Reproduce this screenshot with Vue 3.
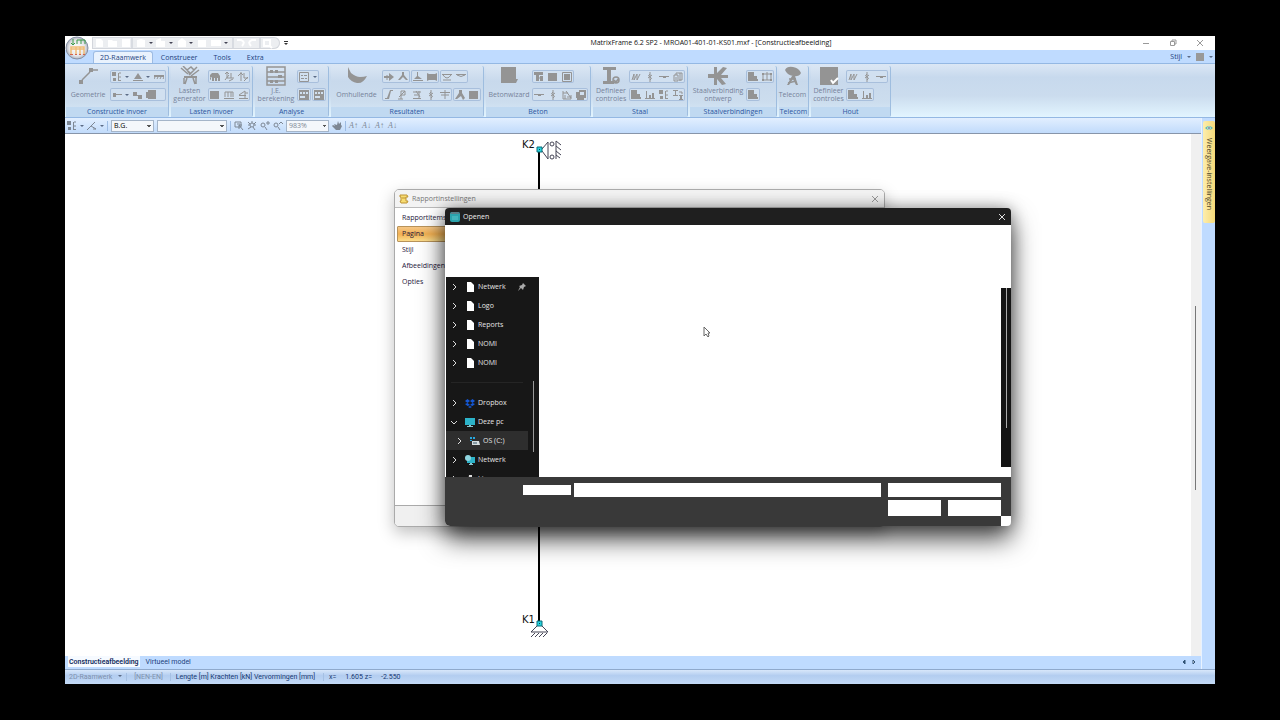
<script setup>
import { h } from 'vue'

// Each glyph is [filled path, stroked path] on a 10 x 10 grid.
const glyphs = {
  nodes: ['M0 0h4v4H0zM1 6h3v3H1zM6 1h1v8H6z', 'M7 1h2M7 5h2M7 8.500h2'],
  support: ['M5 1L9 7H1zM0 8h10v1H0z', ''],
  beam: ['M0 3h10v2H0z', 'M1 5L0 7M4 5L3 7M7 5L6 7M10 5L9 7'],
  rod: ['M1 3h3v1h6v1H4v2H1z', ''],
  corner: ['M0 2h4v3h5v4H5V6H0z', ''],
  solid: ['M0 2h2V0h8v9H2V8H0z', ''],
  block: ['M0 1h9v8H0z', ''],
  truck: ['M0 3l2-2h6l2 3v5H8V6H7v3H5V6H4v3H2V5H0z', 'M1 5L0 8'],
  axes: ['', 'M3 0v6h7M1 2l2-2 2 2M7 1v5M5 9l4-2M1 8l4-5'],
  axes2: ['', 'M3 0v9M0 4l3-3 2 2M6 1v5h4M6 9l4-4'],
  comb: ['M0 8h10v1H0z', 'M1 7V2h8v5M4 2v5M7 2v5'],
  loads: ['M1 5h7v1H1zM1 8h9v1H1z', 'M1 5l6-4v8M7 3h3'],
  sheet: ['M0 0h10v10H0zM1 2v2h2V2zM4 2v2h2V2zM7 2v2h2V2zM1 6v2h5V6z', ''],
  sheetLine: ['M2 3h2v1H2zM5 3h3v1H5zM2 6h3v1H2zM6 6h2v1H6z', 'M.5.5h9v9h-9z'],
  arrowR: ['M0 4h5V1l5 4-5 4V6H0z', 'M3 3v5'],
  peak: ['M4 0h2v3l4 5H8L5 5 2 8H0l4-5z', ''],
  peakBase: ['M4 0h1v4l4 3H1l3-3zM0 8h10v1H0z', ''],
  flag: ['M0 1l2 1h6l2-1v8L8 8H2L0 9z', ''],
  bowl: ['M0 2h10v1H0z', 'M1 3q4 6 8 0M1 8h8'],
  cup: ['M0 2h10v1H0z', 'M1 3q4 3 8 0'],
  ess: ['M6 0h3v1H7L5 9H1V8h2z', ''],
  pee: ['', 'M3 9V1h4v4H3M0 9h5M1 7l6-6'],
  crossed: ['M1 8h8v1H1z', 'M1 2h8M4 1l4 6M7 1v7M2 5h4'],
  wave: ['', 'M5 0v10M5 2q-3 2 0 3t0 3M7 3L3 6'],
  dash: ['M0 4h10v1H0zM4 5h3v1H4z', ''],
  tee: ['M0 2h10v1H0z', 'M5 0v9M1 5h8'],
  peakFill: ['M4 0h3v3l3 5-2 2-2-4-4 3H0l4-6z', ''],
  tBlock: ['M0 0h9v3H5v6H2V3H0zM6 4h3v5H6z', 'M5 6h4'],
  frame: ['M2 2h6v6H2z', 'M.5.5h9v9h-9z'],
  mesh: ['', 'M1 1v8h8V5M1 3h5M4 1l5 7M3 5v4M5 7h4'],
  copies: ['M0 2h3V0h7v8H8v2H1V8H0zM4 2v3h4V2z', ''],
  zigzag: ['', 'M1 8l2-6v6l3-6v6l3-6'],
  windows: ['', 'M1 3h4v6H1zM3 3V1h6v7H6M7 1v8M3 5v3'],
  shape: ['M0 0h6v4h3v3h1v2H0z', ''],
  bars: ['M1 1h1v8H1zM4 5h2v4H4zM7 3h2v6H7zM0 8h10v1H0z', ''],
  profile: ['M0 0h5v1H3v4h2v1H0V5h2V1H0zM6 5h4v1H9v3h1v1H6V9h1V6H6z', 'M6 2h3v2'],
  grid: ['M0 1h2v2H0zM8 1h2v2H8zM0 7h2v2H0zM8 7h2v2H8z', 'M1 1v8M9 1v8M1 2h8M1 8h8M5 0v8'],
  zoomBox: ['', 'M1 1h6v5H1zM5 4l4 5M3 3h3M5 8V4h3'],
  zoomAll: ['', 'M3 4a2 2 0 1 0 4 0a2 2 0 1 0-4 0M6 6l2 3M1 1l2 2M9 1L7 3M1 8l3-2M5 0v2M1 4h2M7 4h2'],
  zoomIn: ['', 'M1 4a2 2 0 1 0 4 0a2 2 0 1 0-4 0M5 6l2 3M6 2h4M8 0v4'],
  zoomOut: ['', 'M1 4a2 2 0 1 0 4 0a2 2 0 1 0-4 0M5 6l2 3M6 3l2-2 2 2'],
  hand: ['M2 3l3 1 1-4 1 3 2-2v3l1 1-2 4H4L0 5l1-1 2 1z', ''],
  angle: ['', 'M0 9l8-8M4 5l5 3M6 8h3']
}
const bigGlyphs = {
  line: ['M1 14h4v4H1zM11 2h4v4h-4z', 'M4 14l8-8M15 4h5'],
  loadgen: ['M4 10h13v2H4z', 'M1 2l7 6M3 0l7 7M17 1l-8 8M19 4l-8 6M4 12v6M16 12v6M7 12l-2 6M13 12l2 6M7 4l4-3 3 3-4 4z'],
  abacus: ['M4 4h3v3H4zM9 4h3v3H9zM12 9h4v3h-4zM4 14h3v3H4zM9 14h3v3H9z', 'M1 1h18v18H1zM1 6h18M1 11h18M1 15h18'],
  envelope: ['M1 1l3 6q5 4 9 4t7-1q-4 8-10 7T1 11z', ''],
  concrete: ['M2 1h15v12h2l-2 4H2z', ''],
  steel: ['M2 1h13v3h-5v11h3v3H2v-3h4V4H2z', 'M12 14a3 3 0 1 0 6 0a3 3 0 1 0-6 0M13 14l2 2 3-4'],
  joint: ['M0 8h6V1h3v6l6-6 4 1-6 7h7v3h-7l5 6-4 1-5-6v6H6v-7H0z', ''],
  dish: ['M2 4q2-4 8-3t8 6q-2 4-8 3T2 4zM9 10h3l3 9h-2l-3-6-4 6H4z', 'M6 13h7M5 17l8-2'],
  check: ['M1 1h18v18H1z', '']
}
function Glyph(props) {
  const big = props.big
  const [fill, line] = big ? bigGlyphs[props.name] : glyphs[props.name]
  const side = big ? 20 : 10
  return h('svg', { viewBox: `0 0 ${side} ${side}`, width: side, height: side, 'aria-hidden': 'true' }, [
    h('path', { d: fill, fill: 'currentColor' }),
    h('path', { d: line, fill: 'none', stroke: 'currentColor', 'stroke-width': big ? 1.5 : 1 }),
    props.name === 'check' ? h('path', { d: 'M12 14l2 3 5-5', fill: 'none', stroke: '#fff', 'stroke-width': 2 }) : null
  ])
}
Glyph.props = { name: String, big: Boolean }

// '>' marks a drop-down arrow after the preceding glyph.
const groups = [
  { title: 'Constructie invoer', icon: 'line', label: ['Geometrie'], width: 44, wide: true,
    rows: [[['nodes', '>', 'support', '>', 'beam']], [['rod', '>', 'corner', 'solid']]] },
  { title: 'Lasten invoer', icon: 'loadgen', label: ['Lasten', 'generator'], width: 37,
    rows: [[['truck', 'axes', 'axes2']], [['block', 'comb', 'loads']]] },
  { title: 'Analyse', icon: 'abacus', label: ['J.E.', 'berekening'], width: 42,
    rows: [[['sheetLine', '>']], [['sheet'], ['sheet']]] },
  { title: 'Resultaten', icon: 'envelope', label: ['Omhullende'], width: 51,
    rows: [[['arrowR', 'peak'], ['peakBase', 'flag'], ['bowl', 'cup']], [['ess', 'pee', 'crossed', 'wave', 'tee'], ['peakFill', 'block']]] },
  { title: 'Beton', icon: 'concrete', label: ['Betonwizard'], width: 46,
    rows: [[['tBlock', 'block', 'frame']], [['dash', 'wave', 'mesh', 'copies']]] },
  { title: 'Staal', icon: 'steel', label: ['Definieer', 'controles'], width: 36,
    rows: [[['zigzag', 'wave', 'dash', 'windows']], [['shape', 'bars', 'nodes', 'profile']]] },
  { title: 'Staalverbindingen', icon: 'joint', label: ['Staalverbinding', 'ontwerp'], width: 56,
    rows: [[['shape', 'grid']], [['shape']]] },
  { title: 'Telecom', icon: 'dish', label: ['Telecom'], width: 27, rows: [] },
  { title: 'Hout', icon: 'check', label: ['Definieer', 'controles'], width: 35,
    rows: [[['zigzag', 'wave', 'dash']], [['shape', 'bars']]] }
]
const tabs = ['2D-Raamwerk', 'Construeer', 'Tools', 'Extra']
const sections = ['Rapportitems', 'Pagina', 'Stijl', 'Afbeeldingen', 'Opties']
const places = [
  { name: 'Netwerk', kind: 'file', pinned: true },
  { name: 'Logo', kind: 'file' },
  { name: 'Reports', kind: 'file' },
  { name: 'NOMI', kind: 'file' },
  { name: 'NOMI', kind: 'file' },
  { kind: 'divider' },
  { name: 'Dropbox', kind: 'dropbox' },
  { name: 'Deze pc', kind: 'pc', open: true },
  { name: 'OS (C:)', kind: 'drive', child: true },
  { name: 'Netwerk', kind: 'network' },
  { name: 'Linux', kind: 'linux' }
]
</script>

<template>
  <div class="screen">
    <div class="app">
      <header class="titlebar">
        <div class="quick">
          <svg viewBox="0 0 188 12" aria-hidden="true">
            <g fill="#fff">
              <path d="M4 2h5l2 2v6H4zM16 3h4l1 1h4v6h-9zM30 2h8v8h-8zM45 3l4-1 4 1v7h-8zM64 3l5-2v3h4v6h-9zM86 4l4-3 4 3v6h-8zM106 3h8v7h-8zM119 3h10v6h-10z" />
            </g>
            <g fill="none" stroke="#fff" stroke-width="2"><path d="M145 3h4q5 2 1 6M164 3h-4q-5 2-1 6M172 3h6v6h-6zM177 8l3 3" /></g>
            <path d="M40 1v10M141 1v10M168 1v10" stroke="#c4c9d2" />
            <path d="M57 5h4l-2 2zM77 5h4l-2 2zM97 5h4l-2 2zM132 5h4l-2 2z" fill="#445" />
          </svg>
        </div>
        <span class="more" aria-hidden="true"></span>
        <h1>MatrixFrame 6.2 SP2 - MROA01-401-01-KS01.mxf - [Constructieafbeelding]</h1>
        <div class="sys">
          <button aria-label="Minimaliseren"><svg viewBox="0 0 8 8"><path d="M1 4.500h6" /></svg></button>
          <button aria-label="Herstellen"><svg viewBox="0 0 8 8"><path d="M1.500 2.500h4v4h-4zM3 2V1h4v4H6" /></svg></button>
          <button aria-label="Sluiten"><svg viewBox="0 0 8 8"><path d="M1 1l6 6M7 1L1 7" /></svg></button>
        </div>
      </header>
      <svg class="orb" viewBox="0 0 24 24" aria-hidden="true">
        <defs>
          <radialGradient id="orbFill"><stop offset="0" stop-color="#fff" /><stop offset="0.7" stop-color="#e8e8ea" /><stop offset="1" stop-color="#aeb4c0" /></radialGradient>
        </defs>
        <circle cx="12" cy="12" r="11" fill="url(#orbFill)" stroke="#8791a5" />
        <path d="M6 18v-7h13v7M6 13h13M11 11v7M15 11v7" fill="none" stroke="#f0bd78" stroke-width="1.500" />
        <path d="M8 3v6M6 7l2 2 2-2M12 8V4h8v4M16 4v4" fill="none" stroke="#3c9a49" />
        <path d="M5 18h3v1H5zM10 18h2v1h-2zM14 18h2v1h-2zM18 18h2v1h-2z" fill="#d4634c" />
      </svg>

      <nav class="tabs">
        <button v-for="(t, i) in tabs" :key="t" :class="{ active: i === 0 }">{{ t }}</button>
        <span class="style-menu">Stijl <i class="caret"></i><b></b><i class="caret"></i></span>
      </nav>

      <div class="ribbon">
        <section v-for="g in groups" :key="g.title" class="group">
          <div class="tools">
            <button class="big" :style="{ width: g.width + 'px' }">
              <Glyph :name="g.icon" big />
              <span class="cap"><span v-for="l in g.label" :key="l">{{ l }}</span></span>
            </button>
            <div v-if="g.rows.length" class="rows" :class="{ wide: g.wide }">
              <div v-for="(row, r) in g.rows" :key="r" class="row">
                <div v-for="(box, b) in row" :key="b" class="box">
                  <template v-for="(n, k) in box" :key="k">
                    <span v-if="n === '>'" class="drop"><i class="caret"></i></span>
                    <span v-else class="cell"><Glyph :name="n" /></span>
                  </template>
                </div>
              </div>
            </div>
          </div>
          <h2>{{ g.title }}</h2>
        </section>
      </div>

      <div class="body">
        <div class="main">
          <div class="toolbar">
            <Glyph name="nodes" /><i class="caret"></i>
            <Glyph name="angle" /><i class="caret"></i>
            <span class="rule"></span>
            <select class="case" aria-label="Belastingsgeval"><option>B.G.</option></select>
            <select class="combo" aria-label="Combinatie"><option></option></select>
            <span class="rule"></span>
            <Glyph name="zoomBox" /><Glyph name="zoomAll" /><Glyph name="zoomIn" /><Glyph name="zoomOut" />
            <select class="scale" aria-label="Schaal"><option>983%</option></select>
            <Glyph name="hand" />
            <span class="rule"></span>
            <span v-for="(a, i) in ['↑', '↓', '↑', '↓']" :key="i" class="font-size"><em>A</em>{{ a }}</span>
          </div>

          <div class="workspace">
            <svg class="column" viewBox="0 0 60 510" aria-hidden="true">
              <path d="M19 16v475" stroke="#000" stroke-width="2" />
              <g fill="none" stroke="#445">
                <path d="M22 15l6-7v17l-6-8M36 7v18M36 7l5 4M36 12l5 4M36 17l5 4M36 21l4 3" />
                <circle cx="32" cy="10" r="2" /><circle cx="32" cy="23" r="2" />
                <path d="M17 492l-6 6h17l-6-6M11 503l4-4M15 503l4-4M19 503l4-4M23 503l4-4" />
              </g>
              <path d="M17 13h5v5h-5zM17 487h5v5h-5z" fill="#27d3de" stroke="#0a6c78" />
              <path d="M19 15h1v1h-1zM19 489h1v1h-1z" fill="#045" />
            </svg>
            <span class="node top">K2</span>
            <span class="node bottom">K1</span>
            <div class="scroll"></div>

            <section class="report">
              <header>
                <svg viewBox="0 0 10 10" aria-hidden="true"><path d="M1 1h7l1 2H7v4h2L8 9H2L1 7h1V3H1z" fill="#f7dc72" stroke="#bd9333" /><path d="M3 4h4" stroke="#bd9333" /></svg>
                <span>Rapportinstellingen</span>
                <button aria-label="Sluiten"><svg viewBox="0 0 8 8"><path d="M1 1l6 6M7 1L1 7" /></svg></button>
              </header>
              <div class="pages">
                <button v-for="s in sections" :key="s" :class="{ active: s === 'Pagina' }">{{ s }}</button>
              </div>
              <footer></footer>
            </section>

            <section class="open">
              <header>
                <svg viewBox="0 0 10 10" aria-hidden="true"><rect width="10" height="10" rx="2" fill="#2ba3ac" /><path d="M0 2l2-2h6l2 2z" fill="#5c7d86" /><path d="M2 5h6M2 7h6" stroke="#5cc6cb" fill="none" /></svg>
                <span>Openen</span>
                <button aria-label="Sluiten"><svg viewBox="0 0 8 8"><path d="M1 1l6 6M7 1L1 7" /></svg></button>
              </header>
              <div class="files">
                <div class="tree">
                  <ul>
                    <li v-for="(p, i) in places" :key="i" :class="[p.kind, { child: p.child }]">
                      <template v-if="p.name">
                        <svg class="chev" viewBox="0 0 6 6" aria-hidden="true"><path :d="p.open ? 'M0 2l3 3 3-3' : 'M2 0l3 3-3 3'" /></svg>
                        <svg class="pic" viewBox="0 0 10 10" aria-hidden="true">
                          <path v-if="p.kind === 'file'" d="M2 0h4l3 3v7H2z" fill="#fff" />
                          <path v-else-if="p.kind === 'dropbox'" d="M0 3l2.500-2L5 3 2.500 5zM5 3l2.500-2L10 3 7.500 5zM0 6l2.500-1L5 7 2.500 8zM5 7l2.500-2L10 6 7.500 8zM3 9l2-1 2 1-2 1z" fill="#1558d6" />
                          <g v-else-if="p.kind === 'pc'"><path d="M0 1h10v7H0z" fill="#2cb3c9" /><path d="M4 8h2v1h2v1H2V9h2z" fill="#8bc5ce" /></g>
                          <g v-else-if="p.kind === 'drive'"><path d="M0 1h2v2H0zM3 1h2v2H3zM0 4h2v1H0z" fill="#26a7df" /><path d="M2 5h7l1 4H2z" fill="#d5dde0" /><path d="M3 7h4" stroke="#356" /></g>
                          <g v-else-if="p.kind === 'network'"><path d="M2 2h8v6H2z" fill="#2cb3c9" /><circle cx="3" cy="3" r="3" fill="#8fd5df" /><path d="M5 8h2v1h1v1H4V9h1z" fill="#8bc5ce" /></g>
                          <path v-else d="M4 1h3v8H3z" fill="#ddd" />
                        </svg>
                        <span>{{ p.name }}</span>
                        <svg v-if="p.pinned" class="pin" viewBox="0 0 8 8" aria-hidden="true"><path d="M5 0l3 3-2 1-1 3-2-2-3 3 2-4L1 3l3-1z" fill="#aaa" /></svg>
                      </template>
                    </li>
                  </ul>
                  <div class="thumb"></div>
                </div>
                <div class="list"></div>
                <div class="rail"><div class="thumb"></div></div>
              </div>
              <footer>
                <div class="name"></div>
                <input type="text" aria-label="Bestandsnaam" />
                <div class="actions">
                  <select aria-label="Bestandstype"><option></option></select>
                  <button aria-label="Openen"></button>
                  <button aria-label="Annuleren"></button>
                </div>
                <div class="grip"></div>
              </footer>
            </section>

            <svg class="cursor" viewBox="0 0 8 12" aria-hidden="true"><path d="M1 1v9l2-2 2 3 1-1-1-3h2z" fill="#fff" stroke="#666" /></svg>
          </div>

          <div class="views">
            <button class="active">Constructieafbeelding</button>
            <button>Virtueel model</button>
            <svg viewBox="0 0 14 6" aria-hidden="true"><path d="M3 1v4L1 3z" fill="#357" stroke="#357" /><path d="M11 1v4l2-2z" fill="#fff" stroke="#357" /></svg>
          </div>
        </div>
        <aside>
          <button>
            <svg viewBox="0 0 10 6" aria-hidden="true"><path d="M0 3q5-5 10 0q-5 5-10 0z" fill="#5cbcb0" /><circle cx="5" cy="3" r="2" fill="#fff" /><circle cx="5" cy="3" r="1" fill="#124" /></svg>
            <span>Weergave-instellingen</span>
          </button>
        </aside>
      </div>

      <footer class="status">
        <span class="dim mode">2D-Raamwerk <i class="caret"></i></span>
        <span class="dim norm">[NEN-EN]</span>
        <span class="units">Lengte [m] Krachten [kN] Vervormingen [mm]</span>
        <span class="coords"><span>x=</span><span>1.605 z=</span><span>-2.550</span></span>
      </footer>
    </div>
  </div>
</template>

<style>
body { margin: 0; background: #000; }
</style>

<style scoped>
* { box-sizing: border-box; }
.screen { min-height: 100vh; padding: 36px 65px; display: flex; background: #000; font: 7px/8px "Open Sans", "Noto Sans", sans-serif; color: #1b2b50; }
.app { position: relative; flex: 1; min-width: 0; display: flex; flex-direction: column; background: #bfdbff; }
button, input, select { font: inherit; color: inherit; border: 0; padding: 0; margin: 0; background: none; border-radius: 0; }
select { appearance: none; }
h1, h2, ul { margin: 0; padding: 0; font: inherit; }
svg { display: block; flex: none; }
.caret { display: inline-block; flex: none; border: 2px solid transparent; border-top-color: #5b6b85; border-bottom: 0; width: 4px; height: 2px; }

.titlebar { height: 14px; display: grid; grid-template-columns: 1fr auto 1fr; align-items: center; background: #fff; }
.quick { grid-column: 1; grid-row: 1; width: 188px; height: 12px; margin-left: 27px; background: #eceef1; box-shadow: inset 0 0 0 1px #d3d6dc; border-radius: 0 6px 6px 0; }
.quick svg { width: 188px; height: 12px; }
.more { grid-column: 1; grid-row: 1; margin-left: 219px; width: 4px; height: 5px; border-top: 1px solid #333; }
.more::after { content: ""; display: block; margin-top: 1px; border: 2px solid transparent; border-top-color: #333; border-bottom: 0; }
.titlebar h1 { grid-column: 2; margin-left: 142px; color: #111; }
.sys { grid-column: 3; display: flex; justify-content: flex-end; gap: 19px; padding-right: 11px; }
.sys svg, .report header button svg, .open header button svg { width: 8px; height: 8px; fill: none; stroke: #999; }
.orb { position: absolute; left: 0; top: 0; width: 24px; height: 24px; }

.tabs { height: 13px; display: flex; padding: 1px 2px 0 28px; background: #bfdbff; }
.tabs button { padding: 1px 8px 0; color: #1c3f7d; }
.tabs button.active { padding: 0 6px; background: #e9f2fd; border: 1px solid #9dbbe3; border-bottom: 0; border-radius: 3px 3px 0 0; }
.style-menu { margin-left: auto; display: flex; align-items: center; gap: 5px; color: #1c3f7d; }
.style-menu b { width: 8px; height: 8px; background: #999; }

.ribbon { display: flex; gap: 2px; height: 55px; padding: 2px 1px 0; background: linear-gradient(#dbe7f5, #c7d9ed 25%, #cbdcee 60%, #e2f5ff); border: 1px solid #94b8e3; border-width: 1px 0; }
.group { display: flex; flex-direction: column; border-right: 1px solid #9ebddf; border-radius: 2px; background: linear-gradient(#dae6f4, #c8d9ec 30%, #ccddee 70%, #d7e9f8); }
.tools { flex: 1; display: flex; padding-right: 2px; }
.big { display: flex; flex-direction: column; align-items: center; color: #949494; }
.cap { height: 16px; display: flex; flex-direction: column; justify-content: center; margin-top: 1px; white-space: nowrap; color: #76829a; }
.rows { display: flex; flex-direction: column; gap: 5px; padding-top: 4px; }
.row { display: flex; gap: 1px; }
.box { display: flex; height: 13px; box-shadow: inset 0 0 0 1px #a8bfdc; border-radius: 2px; color: #949494; background: #d1e0f0; }
.cell { display: flex; width: 14px; align-items: center; justify-content: center; }
.wide .box { width: 56px; }
.wide .cell { width: 13px; }
.drop { width: 8px; display: flex; align-items: center; justify-content: center; }
.group h2 { height: 10px; line-height: 9px; text-align: center; color: #2c56a0; background: #c0d9f1; }

.body { flex: 1; min-height: 0; display: flex; }
.main { flex: 1; min-width: 0; display: flex; flex-direction: column; }
.toolbar { height: 16px; display: flex; align-items: center; gap: 3px; padding: 0 2px; background: linear-gradient(#e2efff, #c1dbfb); border-bottom: 1px solid #8795a9; color: #7d8794; }
.rule { width: 1px; height: 10px; background: #9dbce4; }
.toolbar select { height: 12px; border: 1px solid #a5b5c9; background: #f4f7fb; padding: 0 2px; background-image: linear-gradient(45deg, transparent 50%, #555 50%), linear-gradient(-45deg, transparent 50%, #555 50%); background-size: 2px 2px; background-position: right 4px center, right 2px center; background-repeat: no-repeat; }
.toolbar .case { width: 43px; color: #000; }
.combo { width: 70px; }
.scale { width: 43px; }
.font-size { display: flex; width: 10px; font: 8px/10px "Liberation Serif", serif; }

.workspace { position: relative; flex: 1; min-height: 0; display: flex; justify-content: flex-end; background: #fff; }
.scroll { width: 10px; background: linear-gradient(#777, #777) 4px 172px / 1px 184px no-repeat #f0f0f0; }
.column { position: absolute; left: 455px; top: 0; width: 60px; height: 510px; }
.node { position: absolute; left: 457px; font: 10px/12px "DejaVu Sans", sans-serif; color: #111; }
.node.top { top: 5px; }
.node.bottom { top: 480px; }

.report { position: absolute; left: 329px; top: 55px; width: 491px; height: 338px; display: flex; flex-direction: column; background: #fff; border: 1px solid #aaa; border-radius: 5px; overflow: hidden; box-shadow: 0 6px 16px rgba(0, 0, 0, .25); }
.report header { height: 18px; display: flex; align-items: center; gap: 3px; padding: 0 5px 0 4px; background: #f3f3f3; border-bottom: 1px solid #bbb; color: #777; }
.report header svg { width: 10px; height: 10px; }
.report header button { margin-left: auto; }
.pages { flex: 1; display: flex; flex-direction: column; align-items: flex-start; padding: 2px; }
.pages button { width: 60px; height: 16px; padding: 0 4px; text-align: left; color: #25163a; border: 1px solid transparent; border-radius: 1px; }
.pages .active { border-color: #b8935a; background: linear-gradient(#f5c787, #f2b052 50%, #fbdc8b); }
.report footer { height: 21px; background: #f0f0f0; border-top: 1px solid #aaa; }

.open { position: absolute; left: 380px; top: 74px; width: 566px; height: 318px; display: flex; flex-direction: column; background: #fff; border-radius: 5px; box-shadow: 0 13px 26px rgba(0, 0, 0, .7), 0 0 16px rgba(0, 0, 0, .35); }
.open header { height: 17px; display: flex; align-items: center; gap: 3px; padding: 0 5px; background: #1f1f1f; border-radius: 4px 4px 0 0; color: #eee; }
.open header svg { width: 10px; height: 10px; }
.open header button { margin-left: auto; }
.open header button svg { stroke: #ddd; }
.files { flex: 1; min-height: 0; display: flex; }
.tree { width: 93px; margin: 52px 0 0 1px; display: flex; background: #171717; color: #e5e5e5; overflow: hidden; }
.tree ul { list-style: none; flex: 1; }
.tree li { height: 19px; display: flex; align-items: center; padding-left: 5px; }
.tree li.divider { height: 21px; margin: 0 5px; background: linear-gradient(#252525, #252525) center / 100% 1px no-repeat; }
.tree li.child { padding-left: 10px; background: #2e2e2e; }
.chev { width: 6px; height: 6px; margin-right: 8px; fill: none; stroke: #ddd; }
.pic { width: 10px; height: 10px; margin-right: 3px; }
.tree li span { white-space: nowrap; }
.pin { width: 8px; height: 8px; margin-left: auto; margin-right: 2px; }
.tree .thumb { width: 1px; height: 71px; margin: 104px 5px 0 5px; background: #999; }
.list { flex: 1; }
.rail { width: 10px; margin: 63px 0 10px; background: #141414; }
.rail .thumb { width: 1px; height: 140px; margin-left: 5px; background: #aaa; }
.open footer { height: 49px; display: flex; align-items: flex-start; padding: 6px 0 0 78px; background: #393939; border-radius: 0 0 5px 5px; }
.name { width: 48px; height: 10px; margin: 2px 3px 0 0; background: #fff; }
.open input { flex: 1; min-width: 0; height: 14px; background: #fff; }
.actions { width: 113px; margin-left: 7px; display: grid; grid-template-columns: 1fr 1fr; gap: 3px 7px; }
.actions select { grid-column: span 2; height: 14px; background: #fff; }
.actions button { height: 16px; background: #fff; }
.grip { width: 10px; height: 10px; align-self: flex-end; background: #fff; border-radius: 0 0 4px 0; }
.cursor { position: absolute; left: 638px; top: 192px; width: 8px; height: 12px; }

.views { height: 13px; display: flex; align-items: flex-start; padding: 0 5px 0 3px; color: #1c3f7d; font-family: Roboto, "Open Sans", sans-serif; }
.views button { height: 11px; padding: 0 4px; }
.views .active { padding: 0 1px; margin-right: 2px; color: #112a5c; font-weight: 600; background: #f6faff; }
.views svg { width: 14px; height: 6px; margin: 3px 0 0 auto; }
aside { width: 14px; padding: 3px 1px 0 1px; border-left: 1px solid #e8f2ff; }
aside button { width: 12px; height: 102px; display: flex; flex-direction: column; align-items: center; padding-top: 4px; gap: 7px; background: linear-gradient(90deg, #fdeeae, #f5d978); border-radius: 2px; color: #4a4228; }
aside svg { width: 8px; height: 6px; }
aside span { writing-mode: vertical-rl; white-space: nowrap; }

.status { height: 15px; display: flex; align-items: center; border-top: 1px solid #8fa9cc; background: linear-gradient(#d8e7fa, #b3cdf0 40%, #c3daf6); color: #163872; white-space: nowrap; font-family: Roboto, "Open Sans", sans-serif; }
.status > span { border-right: 1px solid #a5c0e3; padding: 0 4px; }
.status .caret { margin-left: 4px; vertical-align: 2px; }
.status .dim { color: #7e90ad; }
.status .norm { padding: 0 7px; }
.status .units { padding: 0 8px 0 5px; }
.status .coords { display: flex; gap: 9px; border: 0; padding-left: 5px; }
</style>
